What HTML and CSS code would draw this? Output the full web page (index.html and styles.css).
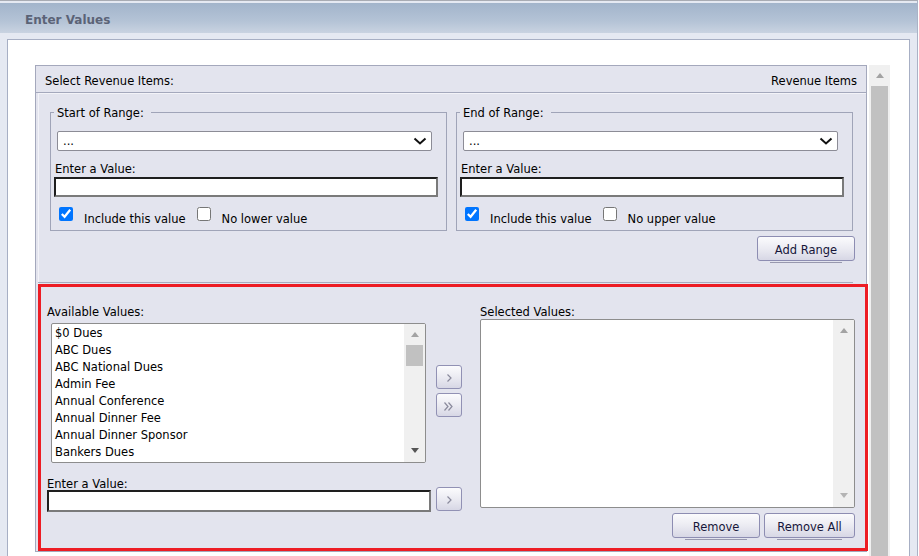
FILE: index.html
```html
<!DOCTYPE html>
<html lang="en">
<head>
    <meta charset="UTF-8">
    <meta name="viewport" content="width=device-width, initial-scale=1.0">
    <title>Enter Values</title>
    <link rel="stylesheet" href="styles.css">
</head>
<body>
<div class="frame">
    <div class="titlebar">Enter Values</div>
    <div class="panel">
        <div class="scrollarea">
            <div class="itembox">
                <div class="itembox-head">
                    <span>Select Revenue Items:</span>
                    <span>Revenue Items</span>
                </div>
                <div class="itembox-body">
                    <div class="ranges">
                        <div class="ranges-row">
                            <fieldset class="range">
                                <legend>Start of Range:</legend>
                                <div class="dropdown">
                                    <span>...</span>
                                    <svg width="14" height="8" viewBox="0 0 14 8"><path d="M1.5 1.5 L7 6.5 L12.5 1.5" fill="none" stroke="#111" stroke-width="2"/></svg>
                                </div>
                                <label class="lbl">Enter a Value:</label>
                                <input class="txt" type="text">
                                <div class="checks">
                                    <input class="cb" type="checkbox" checked><span>Include this value</span>
                                    <input class="cb second" type="checkbox"><span>No lower value</span>
                                </div>
                            </fieldset>
                            <fieldset class="range">
                                <legend>End of Range:</legend>
                                <div class="dropdown">
                                    <span>...</span>
                                    <svg width="14" height="8" viewBox="0 0 14 8"><path d="M1.5 1.5 L7 6.5 L12.5 1.5" fill="none" stroke="#111" stroke-width="2"/></svg>
                                </div>
                                <label class="lbl">Enter a Value:</label>
                                <input class="txt" type="text">
                                <div class="checks">
                                    <input class="cb" type="checkbox" checked><span>Include this value</span>
                                    <input class="cb second" type="checkbox"><span>No upper value</span>
                                </div>
                            </fieldset>
                        </div>
                        <div class="addrow">
                            <button class="btn btn-text btn-add">Add Range</button>
                        </div>
                    </div>
                    <div class="sep"></div>
                    <div class="picker">
                        <div class="col-left">
                            <div class="plabel">Available Values:</div>
                            <div class="listbox listbox-avail">
                                <div class="items">
                                    <div>$0 Dues</div>
                                    <div>ABC Dues</div>
                                    <div>ABC National Dues</div>
                                    <div>Admin Fee</div>
                                    <div>Annual Conference</div>
                                    <div>Annual Dinner Fee</div>
                                    <div>Annual Dinner Sponsor</div>
                                    <div>Bankers Dues</div>
                                </div>
                                <div class="lscroll">
                                    <div class="sarrow"><div class="tri-up"></div></div>
                                    <div class="lthumb"></div>
                                    <div class="sarrow down"><div class="tri-down dark"></div></div>
                                </div>
                            </div>
                            <div class="plabel enter-label">Enter a Value:</div>
                            <input class="txt txt-wide" type="text">
                        </div>
                        <div class="col-mid">
                            <button class="btn arrowbtn first">
                                <svg width="24" height="22" viewBox="0 0 24 22"><polyline points="10.5,8.5 14,12 10.5,15.5" fill="none" stroke="#8a8a9c" stroke-width="1.2"/></svg>
                            </button>
                            <button class="btn arrowbtn">
                                <svg width="24" height="22" viewBox="0 0 24 22"><polyline points="7.5,8.5 11,12.5 7.5,16.5" fill="none" stroke="#8a8a9c" stroke-width="1.2"/><polyline points="11.5,8.5 15,12.5 11.5,16.5" fill="none" stroke="#8a8a9c" stroke-width="1.2"/></svg>
                            </button>
                            <button class="btn arrowbtn far">
                                <svg width="24" height="22" viewBox="0 0 24 22"><polyline points="10.5,8.5 14,12 10.5,15.5" fill="none" stroke="#8a8a9c" stroke-width="1.2"/></svg>
                            </button>
                        </div>
                        <div class="col-right">
                            <div class="plabel">Selected Values:</div>
                            <div class="listbox listbox-sel">
                                <div class="items"></div>
                                <div class="lscroll">
                                    <div class="sarrow"><div class="tri-up"></div></div>
                                    <div class="sarrow down"><div class="tri-down"></div></div>
                                </div>
                            </div>
                            <div class="rbtns">
                                <button class="btn btn-text btn-remove">Remove</button>
                                <button class="btn btn-text btn-removeall">Remove All</button>
                            </div>
                        </div>
                    </div>
                </div>
            </div>
            <div class="vscroll">
                <div class="sarrow"><div class="tri-up"></div></div>
                <div class="vthumb"></div>
            </div>
        </div>
    </div>
</div>
</body>
</html>
```

FILE: styles.css
```css
body{
    margin: 0;
    background: #ffffff;
    font-family: "DejaVu Sans", Verdana, sans-serif;
    font-size: 11.5px;
    color: #000;
    overflow: hidden;
}
.frame{
    width: 918px;
    height: 556px;
    box-sizing: border-box;
    background: #e5e9f2;
    border-top: 1px solid #a8abb3;
    border-right: 1px solid #aab2c6;
    overflow: hidden;
}
.titlebar{
    margin-top: 2px;
    height: 30px;
    box-sizing: border-box;
    padding: 4px 0 0 25px;
    line-height: 26px;
    font-size: 12px;
    font-weight: bold;
    color: #5b6377;
    background: linear-gradient(#a2b4cb, #b4c3d6 60%, #c9d3e1);
}
.panel{
    margin: 6px 0 0 7px;
    width: 903px;
    height: 600px;
    box-sizing: border-box;
    background: #fff;
    border: 1px solid #a7afc4;
    padding: 25px 19px 0 27px;
}
.scrollarea{
    display: flex;
    align-items: flex-start;
    gap: 2px;
}
.itembox{
    width: 832px;
    flex-shrink: 0;
    box-sizing: border-box;
    border: 1px solid #a4a8bc;
    background: #e3e4ee;
}
.itembox-head{
    display: flex;
    justify-content: space-between;
    height: 27px;
    box-sizing: border-box;
    padding: 4px 9px 0 9px;
    line-height: 22px;
    border-bottom: 1px solid #a4a8bc;
}
.itembox-body{
    margin-left: 2px;
    border-left: 1px solid #f3f3f8;
    border-top: 1px solid #f3f3f8;
}
.ranges{
    padding: 11px 11px 21px 11px;
}
.ranges-row{
    display: flex;
    gap: 9px;
}
fieldset.range{
    margin: 0;
    width: 397px;
    min-width: 0;
    box-sizing: border-box;
    border: 1px solid #a0a4b8;
    padding: 0 3px 8px 3px;
}
fieldset.range legend{
    padding: 1px 7px 0 3px;
    line-height: 14px;
}
.dropdown{
    margin: 11px 0 0 3px;
    width: 375px;
    height: 20px;
    box-sizing: border-box;
    border: 1px solid #8c8c96;
    border-radius: 2px;
    background: #fff;
    display: flex;
    align-items: center;
    justify-content: space-between;
    padding: 0 4px 0 5px;
    line-height: 18px;
}
.lbl{
    display: block;
    margin: 10px 0 0 1px;
    padding-top: 1px;
    height: 15px;
    box-sizing: border-box;
    line-height: 15px;
}
.txt{
    display: block;
    margin: 1px 0 0 0;
    width: 384px;
    height: 20px;
    box-sizing: border-box;
    border: 2px solid;
    border-color: #1e1e1e #7a7a7a #7a7a7a #1e1e1e;
    padding: 0;
    background: #fff;
    font: inherit;
    outline: none;
}
.checks{
    display: flex;
    align-items: flex-start;
    height: 16px;
    margin-top: 9px;
}
.checks .cb{
    margin: 1px 0 0 5px;
    width: 14px;
    height: 14px;
}
.checks .cb.second{
    margin-left: 11px;
}
.checks span{
    margin: 6px 0 0 11px;
    line-height: 15px;
}
.addrow{
    display: flex;
    justify-content: flex-end;
    margin-top: 5px;
}
.btn{
    position: relative;
    box-sizing: border-box;
    border: 1px solid #8d8db2;
    border-radius: 3px;
    background: linear-gradient(#fbfbfd, #ebebf2 50%, #d7d7e5);
    font: inherit;
    color: #16163a;
    padding: 0;
    margin: 0;
}
.btn-text{
    height: 25px;
    padding-top: 3px;
}
.btn-text::after{
    content: "";
    position: absolute;
    left: 12px;
    right: 12px;
    bottom: -3px;
    height: 1px;
    background: #9898ae;
}
.btn-add{ width: 98px; }
.btn-remove{ width: 88px; }
.btn-removeall{ width: 91px; }
.sep{
    height: 1px;
    background: #a8abbd;
    margin: 0 13px 0 -1px;
}
.picker{
    margin: 1px -2px 0 -1px;
    border: 3px solid #ed1c24;
    padding: 16px 0 10px 6px;
    display: flex;
}
.col-left{ width: 389px; }
.col-mid{ width: 44px; }
.col-right{ width: 375px; }
.plabel{
    height: 16px;
    box-sizing: border-box;
    padding-top: 2px;
    line-height: 15px;
}
.listbox{
    display: flex;
    background: #fff;
    border: 1px solid #8d8d8d;
    border-radius: 2px;
    box-sizing: border-box;
    overflow: hidden;
}
.listbox-avail{
    margin: 4px 0 0 4px;
    width: 375px;
    height: 140px;
}
.listbox-sel{
    width: 375px;
    height: 189px;
}
.items{
    flex: 1;
    padding: 1px 0 0 3px;
}
.items div{
    line-height: 17px;
    white-space: nowrap;
}
.lscroll{
    width: 21px;
    background: #f0f0f0;
    display: flex;
    flex-direction: column;
}
.sarrow{
    height: 20px;
    box-sizing: border-box;
    display: flex;
    align-items: center;
    justify-content: center;
}
.sarrow.down{
    margin-top: auto;
    padding-bottom: 4px;
}
.tri-up{
    width: 0;
    height: 0;
    border-left: 4.5px solid transparent;
    border-right: 4.5px solid transparent;
    border-bottom: 5px solid #a3a3a3;
}
.tri-down{
    width: 0;
    height: 0;
    border-left: 4.5px solid transparent;
    border-right: 4.5px solid transparent;
    border-top: 5px solid #b4b4b4;
}
.tri-down.dark{
    border-top-color: #555;
}
.lthumb{
    margin: 1px 2px 0 2px;
    height: 21px;
    background: #c1c1c1;
}
.enter-label{
    margin-top: 13px;
    height: 14px;
    padding-top: 1px;
    line-height: 14px;
}
.txt-wide{
    margin: 0;
    height: 22px;
}
.arrowbtn{
    display: block;
    width: 26px;
    height: 24px;
    border-color: #9191b4;
    margin-top: 4px;
}
.arrowbtn svg{
    display: block;
}
.arrowbtn.first{ margin-top: 62px; }
.arrowbtn.far{ margin-top: 70px; }
.rbtns{
    display: flex;
    justify-content: flex-end;
    gap: 4px;
    margin-top: 5px;
}
.vscroll{
    width: 21px;
    height: 520px;
    flex-shrink: 0;
    background: #f0f0f0;
    display: flex;
    flex-direction: column;
}
.vthumb{
    margin: 1px 2px 0 2px;
    flex: 1;
    background: #c1c1c1;
}
```
